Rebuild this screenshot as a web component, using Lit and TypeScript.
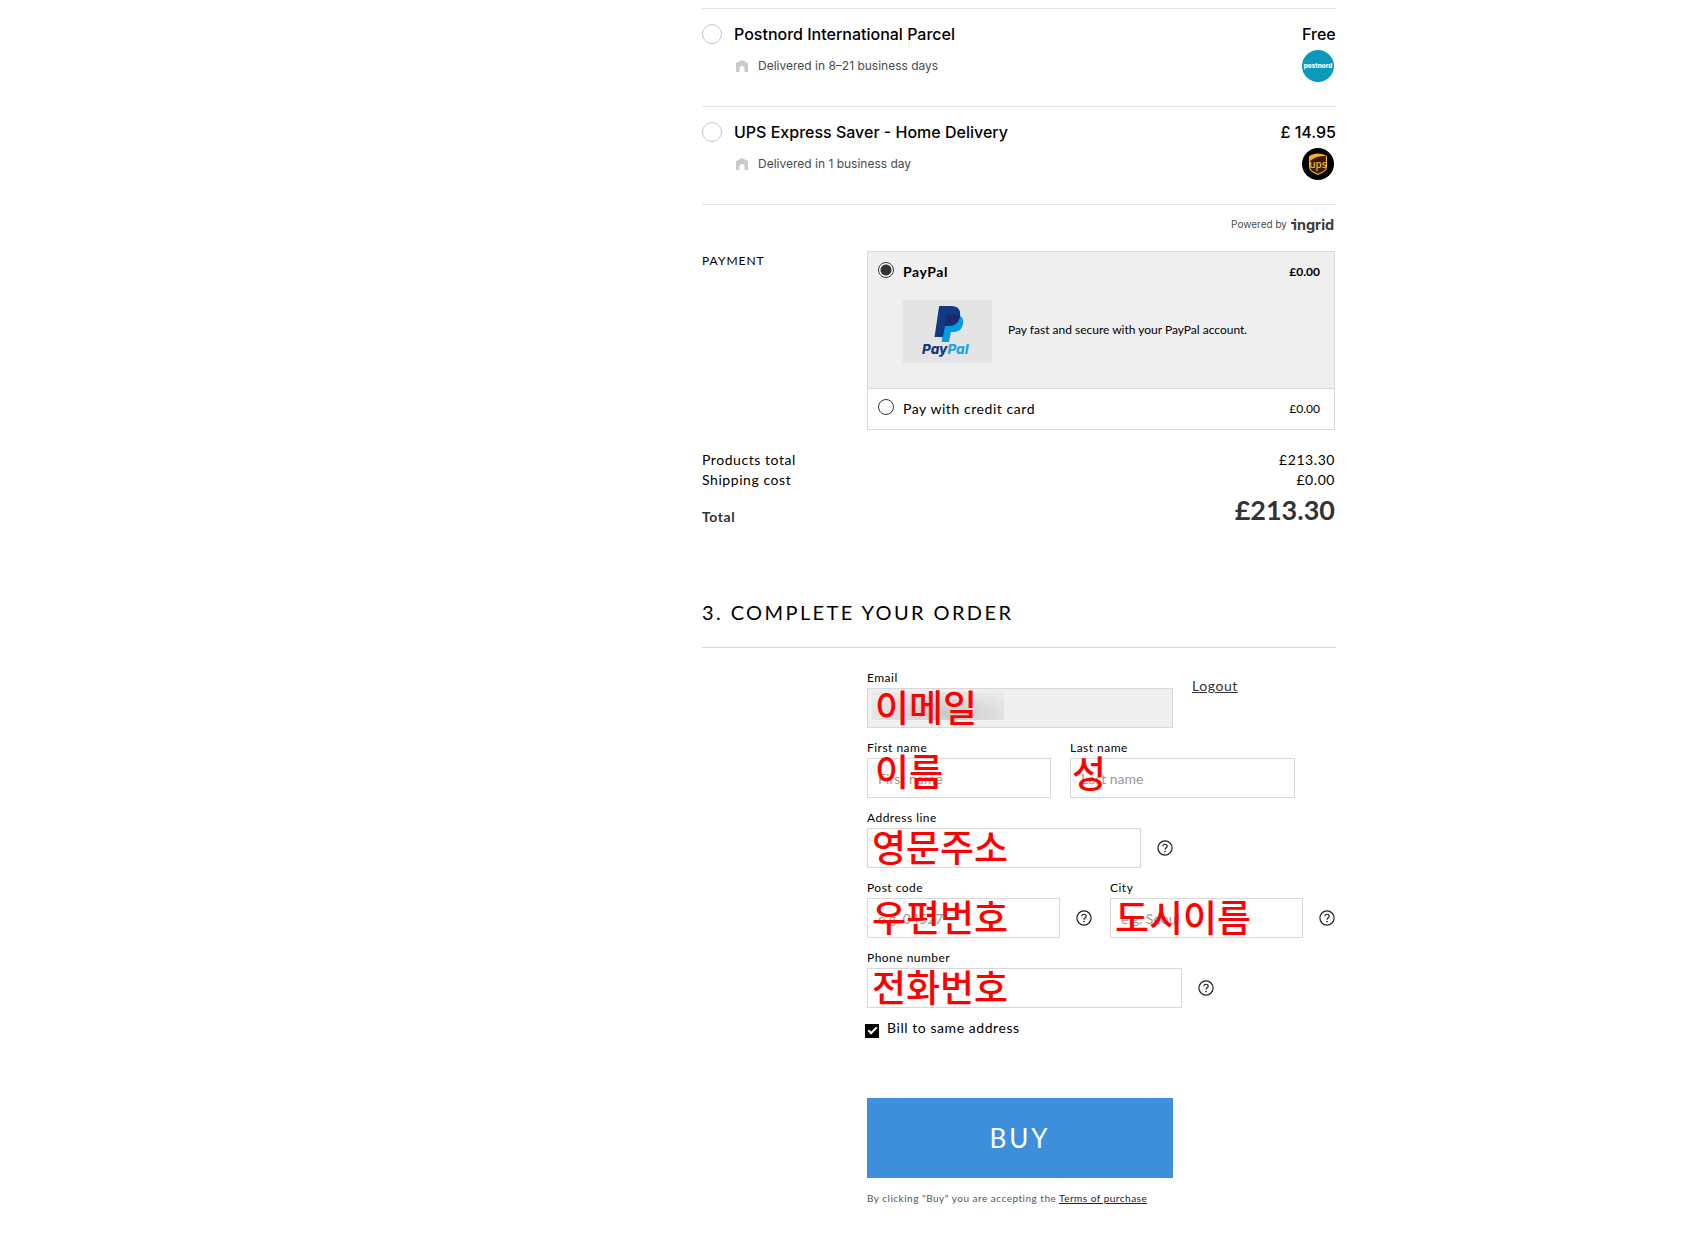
import { LitElement, html, svg, css, nothing } from "lit";
import { customElement, property } from "lit/decorators.js";

const postnordLogo = svg`
  <svg class="carrier" viewBox="0 0 32 32" role="img" aria-label="postnord">
    <circle cx="16" cy="16" r="16" fill="#0a99bb" />
    <text x="16" y="18" text-anchor="middle" font-family="Inter, sans-serif" font-weight="800" font-size="6.300" fill="#fff">postnord</text>
  </svg>`;

const upsLogo = svg`
  <svg class="carrier" viewBox="0 0 32 32" role="img" aria-label="ups">
    <circle cx="16" cy="16" r="16" fill="#000" />
    <path d="M7 8.2C12.500 4.600 19.500 4.600 25 8.200V18.500C25 22.600 22.500 24 16 27C9.500 24 7 22.600 7 18.500Z" fill="#f8b11c" />
    <path d="M8.200 12.800C12.500 8.900 18 7.600 23.900 8V18.400C23.900 21.900 21.800 23 16 25.700C10.200 23 8.200 21.900 8.200 18.400Z" fill="#3a1a0c" />
    <text x="16" y="19.500" text-anchor="middle" font-family="'Open Sans', sans-serif" font-weight="600" font-size="10" fill="#f8b11c">ups</text>
  </svg>`;

const houseIcon = svg`
  <svg class="house" viewBox="0 0 13 12" aria-hidden="true">
    <path d="M6.500 0L12.500 3.200V12H9V8.200C9 5.200 4 5.200 4 8.200V12H0.500V3.200Z" fill="#c9c9c9" />
  </svg>`;

const paypalLogo = svg`
  <svg class="paypal-logo" viewBox="0 0 89 63" role="img" aria-label="PayPal">
    <path d="M43 15H55C59 16 61 19 60 24C59 30 55 32 50 32H48L46 42H38.500Z" fill="#009de2" />
    <path d="M37 6H48C55 6 58 10 57 16C56 23 51 26 45 26H42L40 37H31.500L36 7Q36 6 37 6Z" fill="#123984" />
    <path d="M43 15H57C56.500 23 51 26 45 26H41.500Z" fill="#1b2a6b" />
    <text x="19" y="54" font-family="Inter, 'Liberation Sans', sans-serif" font-weight="800" font-style="italic" font-size="13.500" fill="#123984">Pay<tspan fill="#1ba6e4">Pal</tspan></text>
  </svg>`;

const helpIcon = svg`
  <svg viewBox="0 0 16 16" aria-hidden="true">
    <circle cx="8" cy="8" r="7.100" fill="none" stroke="#222" stroke-width="1.200" />
    <path d="M5.900 6.300C5.900 3.600 10.200 3.600 10.200 6.200C10.200 7.700 8.050 7.900 8.050 9.700" fill="none" stroke="#222" stroke-width="1.200" />
    <circle cx="8.050" cy="11.500" r="0.850" fill="#222" />
  </svg>`;

@customElement("delivery-option")
class DeliveryOption extends LitElement {
  @property() name = "";
  @property() price = "";
  @property() eta = "";
  @property({ attribute: false }) logo: unknown = nothing;

  static styles = css`
    :host {
      display: block;
      border-top: 1px solid #e2e2e2;
      font-family: Inter, "Liberation Sans", sans-serif;
    }
    .row {
      display: grid;
      grid-template-columns: 20px 1fr auto;
      column-gap: 12px;
      padding: 13px 0 24px;
    }
    .radio {
      appearance: none;
      width: 20px;
      height: 20px;
      margin: 2px 0 0;
      border: 1px solid #c4c4c4;
      border-radius: 50%;
      background: #fff;
    }
    .radio:checked { border: 6px solid #222; }
    .title, .price {
      font-size: 16px;
      line-height: 24px;
      font-weight: 500;
      color: #000;
    }
    .eta {
      display: flex;
      align-items: center;
      gap: 9px;
      grid-column: 2;
      margin-left: 1px;
      padding-top: 4px;
      font-size: 12px;
      line-height: 16px;
      color: #4a4a4a;
    }
    .house { width: 14px; height: 12px; }
    .carrier { width: 32px; height: 32px; margin: 4px 2px 0 0; justify-self: end; }
  `;

  render() {
    return html`
      <div class="row">
        <input class="radio" type="radio" id="pick" name="delivery" />
        <label class="title" for="pick">${this.name}</label>
        <span class="price">${this.price}</span>
        <div class="eta">${houseIcon}<span>${this.eta}</span></div>
        ${this.logo}
      </div>`;
  }
}

@customElement("form-field")
class FormField extends LitElement {
  @property() label = "";
  @property() placeholder = "";
  @property() note = "";
  @property({ type: Boolean }) locked = false;
  @property({ type: Boolean }) help = false;

  static styles = css`
    :host { display: block; min-width: 0; }
    .label {
      display: block;
      font-size: 12px;
      line-height: 20px;
      color: #000;
      letter-spacing: var(--tracking);
    }
    .line { display: flex; align-items: center; gap: 16px; }
    .box { position: relative; flex: 1; min-width: 0; }
    .input {
      display: block;
      box-sizing: border-box;
      width: 100%;
      height: 40px;
      padding: 0 10px;
      border: 1px solid #d8d8d8;
      border-radius: 0;
      background: #fff;
      font: inherit;
      font-size: 14px;
      color: #000;
    }
    .input:disabled { background: #efefef; }
    .input::placeholder { color: #999; opacity: 1; }
    .note {
      position: absolute;
      left: var(--note-x, 5px);
      top: var(--note-y, -1px);
      font-family: "Noto Sans CJK KR", sans-serif;
      font-size: 37px;
      line-height: 38px;
      font-weight: 500;
      color: #f00;
      white-space: nowrap;
      pointer-events: none;
    }
    .smudge {
      position: absolute;
      left: 5px;
      top: 4px;
      width: var(--smudge, 0px);
      height: 28px;
      background: radial-gradient(ellipse at 55% 80%, rgba(0, 0, 0, 0.16), rgba(0, 0, 0, 0.02) 80%);
      pointer-events: none;
    }
    .help {
      display: block;
      flex: none;
      width: 16px;
      height: 16px;
      padding: 0;
      border: 0;
      background: none;
    }
    .help svg { display: block; width: 16px; height: 16px; }
  `;

  render() {
    return html`
      <label class="label" for="box">${this.label}</label>
      <div class="line">
        <div class="box">
          <input class="input" id="box" type="text" placeholder=${this.placeholder} ?disabled=${this.locked} />
          <span class="smudge"></span>
          <span class="note" lang="ko">${this.note}</span>
        </div>
        ${this.help
          ? html`<button class="help" type="button" aria-label="Help">${helpIcon}</button>`
          : nothing}
      </div>`;
  }
}

@customElement("app-root")
class AppRoot extends LitElement {
  static styles = css`
    :host {
      display: block;
      --tracking: 0.04em;
      font-family: Lato, "Liberation Sans", sans-serif;
      font-size: 14px;
      color: #000;
      background: #fff;
    }
    .page {
      box-sizing: border-box;
      max-width: 971px;
      margin: 0 auto;
      padding: 8px 0 28px 337px;
    }
    .powered {
      display: flex;
      justify-content: flex-end;
      align-items: center;
      gap: 4px;
      height: 38px;
      border-top: 1px solid #e2e2e2;
      font-family: Inter, "Liberation Sans", sans-serif;
      font-size: 10px;
      color: #4a4a4a;
    }
    .ingrid { width: 45px; height: 20px; }
    .columns {
      display: grid;
      grid-template-columns: 165px 1fr;
      margin-right: 1px;
    }
    .caption {
      margin: 0;
      padding-top: 8px;
      font-size: 12px;
      line-height: 20px;
      font-weight: 400;
      letter-spacing: 1px;
    }
    .methods { border: 1px solid #d8d8d8; margin-top: 8px; }
    .method {
      display: grid;
      grid-template-columns: 16px 1fr auto;
      column-gap: 9px;
      padding: 10px 14px 10px 10px;
    }
    .method label { line-height: 20px; letter-spacing: var(--tracking); }
    .method .cost { font-size: 12px; line-height: 20px; }
    .method.active { padding-bottom: 25px; background: #efefef; border-bottom: 1px solid #d8d8d8; }
    .active label, .active .cost { font-weight: 700; }
    .radio {
      appearance: none;
      box-sizing: border-box;
      width: 16px;
      height: 16px;
      margin: 0;
      border: 1px solid #333;
      border-radius: 50%;
      background: #fff;
    }
    .radio:checked { background: radial-gradient(circle, #333 0 5px, #fff 6px); }
    .detail {
      grid-column: 2 / -1;
      display: flex;
      align-items: center;
      gap: 16px;
      margin-top: 18px;
      font-size: 12px;
    }
    .detail span { padding-bottom: 4px; }
    .paypal-logo { width: 89px; height: 63px; background: #e4e4e4; }
    .totals {
      display: grid;
      grid-template-columns: 1fr auto;
      margin: 20px 1px 0 0;
      line-height: 20px;
    }
    .totals dt, .totals dd { letter-spacing: var(--tracking); }
    .totals dd { margin: 0; text-align: right; }
    .totals .sum { color: #333; font-weight: 700; padding-top: 17px; }
    .totals .amount {
      padding-top: 3px;
      font-size: 27px;
      line-height: 34px;
      color: #333;
      font-weight: 700;
      letter-spacing: normal;
    }
    .heading {
      margin: 71px 0 0;
      padding-bottom: 21px;
      border-bottom: 1px solid #d8d8d8;
      font-size: 20px;
      line-height: 28px;
      font-weight: 400;
      letter-spacing: 0.12em;
    }
    .form { margin: 20px 0 0 165px; display: flex; flex-direction: column; gap: 10px; }
    .fields { display: flex; gap: 19px; }
    .email { width: 306px; --note-x: 8px; --smudge: 132px; }
    .first { width: 184px; --note-x: 8px; --note-y: -7px; }
    .last { width: 225px; --note-x: 2px; --note-y: -5px; }
    .address { width: 306px; }
    .post, .city { width: 225px; }
    .phone { width: 347px; }
    .pair { gap: 18px; }
    .logout {
      align-self: flex-start;
      margin-top: 8px;
      line-height: 20px;
      color: #333;
      letter-spacing: var(--tracking);
    }
    .bill { display: flex; align-items: flex-start; gap: 8px; margin-left: -2px; line-height: 20px; }
    .bill label { letter-spacing: var(--tracking); }
    .tick {
      appearance: none;
      display: grid;
      place-items: center;
      width: 14px;
      height: 14px;
      margin: 6px 0 0;
      background: #000;
    }
    .tick::before {
      content: "";
      width: 7px;
      height: 3px;
      margin-bottom: 3px;
      border: solid #fff;
      border-width: 0 0 2px 2px;
      rotate: -45deg;
    }
    .buy {
      width: 306px;
      height: 80px;
      margin-top: 50px;
      border: 0;
      background: #3d8fdb;
      color: #fff;
      font: inherit;
      font-size: 26px;
      letter-spacing: 3px;
    }
    .terms { margin: 0; font-size: 10px; line-height: 20px; color: #555; letter-spacing: 0.05em; }
    .terms a { color: #222; }
    @media (max-width: 1000px) {
      .page { padding-left: 16px; padding-right: 16px; }
    }
  `;

  render() {
    return html`
      <main class="page">
        <delivery-option name="Postnord International Parcel" price="Free"
          eta="Delivered in 8–21 business days" .logo=${postnordLogo}></delivery-option>
        <delivery-option name="UPS Express Saver - Home Delivery" price="£ 14.95"
          eta="Delivered in 1 business day" .logo=${upsLogo}></delivery-option>
        <div class="powered">
          <span>Powered by</span>
          <svg class="ingrid" viewBox="0 0 45 20" role="img" aria-label="ingrid">
            <text x="2" y="16" font-family="Inter, sans-serif" font-weight="700" font-size="14.500" fill="#3c3c3c">ingrid</text>
            <rect x="0" y="8" width="4" height="2" fill="#3c3c3c" />
          </svg>
        </div>

        <section class="columns">
          <h3 class="caption">PAYMENT</h3>
          <div class="methods">
            <div class="method active">
              <input class="radio" type="radio" name="payment" id="paypal" checked />
              <label for="paypal">PayPal</label>
              <span class="cost">£0.00</span>
              <div class="detail">${paypalLogo}<span>Pay fast and secure with your PayPal account.</span></div>
            </div>
            <div class="method">
              <input class="radio" type="radio" name="payment" id="card" />
              <label for="card">Pay with credit card</label>
              <span class="cost">£0.00</span>
            </div>
          </div>
        </section>

        <dl class="totals">
          <dt>Products total</dt><dd>£213.30</dd>
          <dt>Shipping cost</dt><dd>£0.00</dd>
          <dt class="sum">Total</dt><dd class="amount">£213.30</dd>
        </dl>

        <h2 class="heading">3. COMPLETE YOUR ORDER</h2>
        <form class="form">
          <div class="fields">
            <form-field class="email" label="Email" note="이메일" locked></form-field>
            <a class="logout" href="#">Logout</a>
          </div>
          <div class="fields">
            <form-field class="first" label="First name" placeholder="First name" note="이름"></form-field>
            <form-field class="last" label="Last name" placeholder="Last name" note="성"></form-field>
          </div>
          <form-field class="address" label="Address line" note="영문주소" help></form-field>
          <div class="fields pair">
            <form-field class="post" label="Post code" placeholder="e.g. 04527" note="우편번호" help></form-field>
            <form-field class="city" label="City" placeholder="e.g. Seoul" note="도시이름" help></form-field>
          </div>
          <form-field class="phone" label="Phone number" note="전화번호" help></form-field>
          <div class="bill">
            <input class="tick" type="checkbox" id="bill" checked />
            <label for="bill">Bill to same address</label>
          </div>
          <button class="buy" type="button">BUY</button>
          <p class="terms">By clicking "Buy" you are accepting the <a href="#">Terms of purchase</a></p>
        </form>
      </main>`;
  }
}
